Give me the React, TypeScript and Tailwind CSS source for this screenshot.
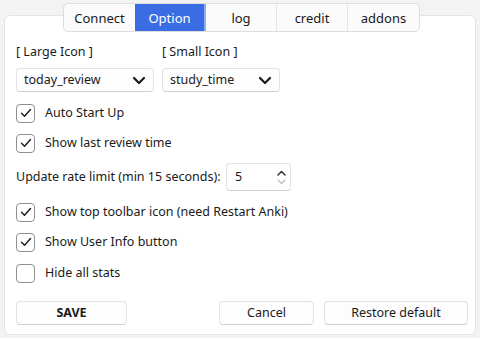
import React from 'react';

const tabs = ['Connect', 'Option', 'log', 'credit', 'addons'];

const Check = ({ checked }: { checked: boolean }) => (
  <div className="w-[19px] h-[19px] rounded-[4px] border border-[#8f8f8f] bg-white flex items-center justify-center">
    {checked && (
      <svg width="12" height="10" viewBox="0 0 12 10" fill="none">
        <path d="M1.5 5.2 L4.5 8.2 L10.5 1.5" stroke="#1b1b1b" strokeWidth="1.4" strokeLinecap="round" strokeLinejoin="round" />
      </svg>
    )}
  </div>
);

const CheckRow = ({ label, checked, className = '' }: { label: string; checked: boolean; className?: string }) => (
  <div className={`flex items-center h-[20px] ${className}`}>
    <Check checked={checked} />
    <span className="ml-[10px]">{label}</span>
  </div>
);

const Combo = ({ value, width }: { value: string; width: string }) => (
  <div className={`${width} h-[24px] flex items-center justify-between pl-[7px] pr-[7px] rounded-[4px] border border-[#e3e3e3] border-b-[#d0d0d0] bg-[#fdfdfd]`}>
    <span>{value}</span>
    <svg width="14" height="9" viewBox="0 0 14 9" fill="none">
      <path d="M2 2 L7 7 L12 2" stroke="#1b1b1b" strokeWidth="2.2" strokeLinecap="round" strokeLinejoin="round" />
    </svg>
  </div>
);

const Btn = ({ children, width, bold = false }: { children: React.ReactNode; width: string; bold?: boolean }) => (
  <div className={`${width} h-[24px] flex items-center justify-center rounded-[4px] border border-[#e3e3e3] border-b-[#cfcfcf] bg-[#fdfdfd] ${bold ? 'font-bold' : ''}`}>
    {children}
  </div>
);

export default function App() {
  return (
    <div className="w-[480px] h-[338px] bg-[#f3f3f3] pt-[3px] px-[4px] text-[12.5px] leading-[18px] text-[#1a1a1a]" style={{ fontFamily: '"Noto Sans", sans-serif' }}>
      {/* tab bar */}
      <div className="relative z-10 flex justify-center pl-[3px]">
        <div className="flex h-[29px] rounded-[5px] border border-[#dedede] bg-[#fbfbfb] overflow-hidden">
          {tabs.map((t, i) => (
            <div
              key={t}
              className={`w-[71px] flex items-center justify-center text-[13px] ${
                t === 'Option'
                  ? 'bg-[#3a6de3] text-white border-r-2 border-[#8fb0f0]'
                  : i < tabs.length - 1 && t !== 'Connect'
                  ? 'border-r border-[#e6e6e6]'
                  : ''
              }`}
            >
              {t}
            </div>
          ))}
        </div>
      </div>

      {/* panel */}
      <div className="-mt-[17px] h-[320px] bg-white border border-[#e4e4e4] rounded-[6px] pt-[27px] pl-[11px] pr-[7px]">
        <div className="flex h-[18px]">
          <span className="w-[146px]">[ Large Icon ]</span>
          <span>[ Small Icon ]</span>
        </div>
        <div className="flex gap-[8px] mt-[7px]">
          <Combo value="today_review" width="w-[138px]" />
          <Combo value="study_time" width="w-[118px]" />
        </div>

        <CheckRow label="Auto Start Up" checked className="mt-[11px]" />
        <CheckRow label="Show last review time" checked className="mt-[10px]" />

        <div className="flex items-center mt-[10px] h-[28px]">
          <span className="w-[210px]">Update rate limit (min 15 seconds):</span>
          <div className="w-[65px] h-[28px] rounded-[4px] border border-[#e3e3e3] border-b-[#d0d0d0] flex items-center justify-between pl-[8px] pr-[4px]">
            <span>5</span>
            <div className="flex flex-col items-center gap-[3px]">
              <svg width="9" height="6" viewBox="0 0 9 6" fill="none">
                <path d="M1 5 L4.5 1.5 L8 5" stroke="#333" strokeWidth="1.5" strokeLinecap="round" strokeLinejoin="round" />
              </svg>
              <svg width="9" height="6" viewBox="0 0 9 6" fill="none">
                <path d="M1 1 L4.5 4.5 L8 1" stroke="#bdbdbd" strokeWidth="1.3" strokeLinecap="round" strokeLinejoin="round" />
              </svg>
            </div>
          </div>
        </div>

        <CheckRow label="Show top toolbar icon (need Restart Anki)" checked className="mt-[11px]" />
        <CheckRow label="Show User Info button" checked className="mt-[10px]" />
        <CheckRow label="Hide all stats" checked={false} className="mt-[11px]" />

        <div className="flex mt-[18px]">
          <Btn width="w-[111px]" bold>SAVE</Btn>
          <div className="flex-1" />
          <Btn width="w-[95px]">Cancel</Btn>
          <Btn width="w-[144px] ml-[10px]">Restore default</Btn>
        </div>
      </div>
    </div>
  );
}
